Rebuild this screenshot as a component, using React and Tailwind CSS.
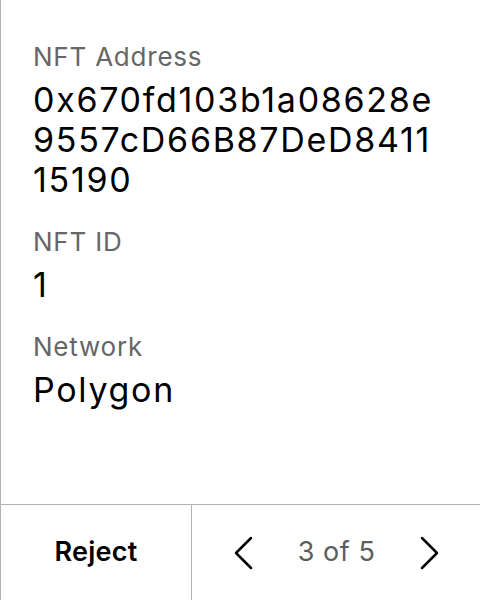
import React from 'react';

const font = { fontFamily: 'Inter, "Noto Sans", sans-serif' };

function Field({ label, value }) {
  return (
    <div className="flex flex-col">
      <span className="text-[26px] leading-[32px] tracking-[0.03em] text-[#666666]">{label}</span>
      <span className="mt-[7px] text-[34px] leading-[40px] tracking-[0.05em] text-black break-all">{value}</span>
    </div>
  );
}

function Chevron({ dir }) {
  return (
    <svg width="20" height="34" viewBox="0 0 20 34" fill="none" stroke="black" strokeWidth="2.5" strokeLinecap="round" strokeLinejoin="round">
      {dir === 'left' ? <path d="M18 2 L3 17 L18 32" /> : <path d="M2 2 L17 17 L2 32" />}
    </svg>
  );
}

export default function App() {
  return (
    <div style={font} className="w-[480px] h-[600px] bg-white flex flex-col border-l border-[#b3b3b3]">
      <div className="flex-1 flex flex-col gap-[26px] pl-[32px] pr-[40px] pt-[41px]">
        <Field label="NFT Address" value="0x670fd103b1a08628e9557cD66B87DeD841115190" />
        <Field label="NFT ID" value="1" />
        <Field label="Network" value="Polygon" />
      </div>
      <div className="h-[96px] flex border-t border-[#b3b3b3]">
        <button className="w-[191px] flex items-center justify-center text-[27px] font-semibold tracking-[0.01em] text-black border-r border-[#b3b3b3]">
          Reject
        </button>
        <div className="flex-1 flex items-center justify-between pl-[41px] pr-[40px]">
          <Chevron dir="left" />
          <span className="text-[27px] tracking-[0.02em] text-[#5c5c5c]">3 of 5</span>
          <Chevron dir="right" />
        </div>
      </div>
    </div>
  );
}
